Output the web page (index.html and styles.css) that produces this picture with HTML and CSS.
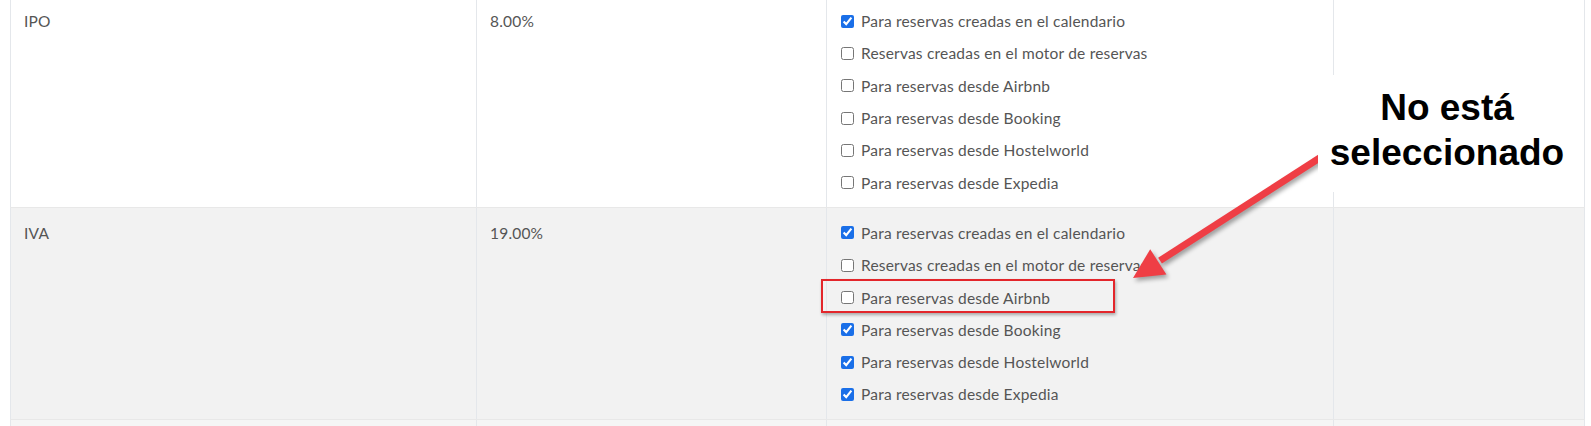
FILE: index.html
```html
<!doctype html>
<html lang="es">
<head>
  <meta charset="utf-8" />
  <meta name="viewport" content="width=device-width,initial-scale=1" />
  <title>Impuestos</title>
  <link rel="stylesheet" href="styles.css">
</head>
<body>
  <div class="page">
    <div class="taxes">
      <div class="row">
        <div class="cell name">IPO</div>
        <div class="cell rate">8.00%</div>
        <div class="cell">
          <label class="opt"><input type="checkbox" checked> Para reservas creadas en el calendario</label>
          <label class="opt"><input type="checkbox"> Reservas creadas en el motor de reservas</label>
          <label class="opt"><input type="checkbox"> Para reservas desde Airbnb</label>
          <label class="opt"><input type="checkbox"> Para reservas desde Booking</label>
          <label class="opt"><input type="checkbox"> Para reservas desde Hostelworld</label>
          <label class="opt"><input type="checkbox"> Para reservas desde Expedia</label>
        </div>
        <div class="cell"></div>
      </div>

      <div class="row alt">
        <div class="cell name">IVA</div>
        <div class="cell rate">19.00%</div>
        <div class="cell">
          <label class="opt"><input type="checkbox" checked> Para reservas creadas en el calendario</label>
          <label class="opt"><input type="checkbox"> Reservas creadas en el motor de reservas</label>
          <label class="opt"><input type="checkbox"> Para reservas desde Airbnb</label>
          <label class="opt"><input type="checkbox" checked> Para reservas desde Booking</label>
          <label class="opt"><input type="checkbox" checked> Para reservas desde Hostelworld</label>
          <label class="opt"><input type="checkbox" checked> Para reservas desde Expedia</label>
        </div>
        <div class="cell"></div>
      </div>

      <div class="row next">
        <div class="cell"></div>
        <div class="cell"></div>
        <div class="cell"></div>
        <div class="cell"></div>
      </div>
    </div>

    <!-- anotacion -->
    <div class="mark"></div>
    <svg class="arrow" width="240" height="160" viewBox="0 0 240 160">
      <line x1="232" y1="10" x2="60" y2="120.6" stroke="#ef3e45" stroke-width="7" />
      <polygon points="33,138 50.2,109.2 66.4,134.4" fill="#ef3e45" />
    </svg>
    <div class="callout">No está<br>seleccionado</div>
  </div>
</body>
</html>
```

FILE: styles.css
```css
:root{--line:#e4e7eb;--text:#555;--alt:#f2f2f2}
body{margin:0;background:#fff;font-family:Lato,"Open Sans",Arial,sans-serif;color:var(--text);font-size:15.5px;letter-spacing:.2px}
.page{position:relative;height:426px;overflow:hidden}
.taxes{margin:-4px 0 0 10px;width:1575px}
.row{display:grid;grid-template-columns:466px 350px 507px 252px}
.row + .row{border-top:1px solid #e8e8e8}
.alt{background:var(--alt)}
.next{background:#f5f5f5;height:40px}
.cell{border-left:1px solid var(--line);padding:9px 14px 8px 13px}
.cell:last-child{border-right:1px solid var(--line)}
.name,.rate{line-height:32px}
.opt{display:flex;align-items:center;gap:7px;height:32.3px;padding-left:1px}
.opt input{margin:0;width:13px;height:13px;accent-color:#1a6fe8}

.mark{position:absolute;left:821px;top:279px;width:290px;height:30px;border:2px solid #e3262b;box-shadow:1px 2px 3px rgba(0,0,0,.3)}
.arrow{position:absolute;left:1100px;top:140px;filter:drop-shadow(2px 3px 2px rgba(0,0,0,.35))}
.callout{position:absolute;left:1318px;top:75px;width:258px;height:117px;box-sizing:border-box;padding-top:10px;background:#fff;text-align:center;font:700 37px/45px "Liberation Sans",Arial,sans-serif;letter-spacing:0;color:#000}
```
